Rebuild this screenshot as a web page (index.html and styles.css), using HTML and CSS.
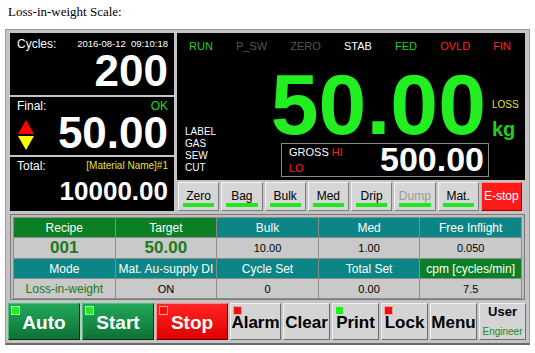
FILE: index.html
```html
<!DOCTYPE html>
<html lang="en">
<head>
  <meta charset="UTF-8" />
  <title>Loss-in-weight Scale</title>
  <link rel="stylesheet" href="styles.css">
</head>
<body>

  <p class="caption">Loss-in-weight Scale:</p>

  <div class="hmi">
    <div class="top">
      <div class="left">
        <div class="box cycles">
          <div class="row"><span>Cycles:</span><span class="date">2016-08-12&nbsp;&nbsp;09:10:18</span></div>
          <div class="big">200</div>
        </div>
        <div class="box final">
          <div class="row"><span>Final:</span><span class="ok">OK</span></div>
          <div class="final-line">
            <svg class="arrows" width="16" height="30" viewBox="0 0 16 30">
              <polygon points="8,0 16,14 0,14" fill="#ff0000"/>
              <polygon points="0,16 16,16 8,30" fill="#ffff00"/>
            </svg>
            <div class="big">50.00</div>
          </div>
        </div>
        <div class="box total">
          <div class="row"><span>Total:</span><span class="mat">[Material Name]#1</span></div>
          <div class="sum">10000.00</div>
        </div>
      </div>

      <div class="right">
        <div class="display">
          <div class="status">
            <span class="on">RUN</span>
            <span class="off">P_SW</span>
            <span class="off">ZERO</span>
            <span>STAB</span>
            <span class="on">FED</span>
            <span class="alarm">OVLD</span>
            <span class="alarm">FIN</span>
          </div>
          <div class="body">
            <div class="flags">
              <div>LABEL</div>
              <div>GAS</div>
              <div>SEW</div>
              <div>CUT</div>
            </div>
            <div class="center">
              <div class="weight">50.00</div>
              <div class="gross">
                <div class="gross-lbl">
                  <div>GROSS <span class="alarm">HI</span></div>
                  <div class="alarm">LO</div>
                </div>
                <div class="gross-val">500.00</div>
              </div>
            </div>
            <div class="units">
              <div class="loss">LOSS</div>
              <div class="kg">kg</div>
            </div>
          </div>
        </div>
        <div class="keys">
          <div class="key">Zero</div>
          <div class="key">Bag</div>
          <div class="key">Bulk</div>
          <div class="key">Med</div>
          <div class="key">Drip</div>
          <div class="key dim">Dump</div>
          <div class="key">Mat.</div>
          <div class="key estop">E-stop</div>
        </div>
      </div>
    </div>

    <div class="params">
      <table>
        <tr>
          <th class="g">Recipe</th>
          <th class="g">Target</th>
          <th>Bulk</th>
          <th>Med</th>
          <th>Free Inflight</th>
        </tr>
        <tr>
          <td class="strong">001</td>
          <td class="strong">50.00</td>
          <td>10.00</td>
          <td>1.00</td>
          <td>0.050</td>
        </tr>
        <tr>
          <th>Mode</th>
          <th>Mat. Au-supply DI</th>
          <th>Cycle Set</th>
          <th>Total Set</th>
          <th class="g">cpm [cycles/min]</th>
        </tr>
        <tr>
          <td class="mode">Loss-in-weight</td>
          <td>ON</td>
          <td>0</td>
          <td>0.00</td>
          <td>7.5</td>
        </tr>
      </table>
    </div>

    <div class="actions">
      <div class="act wide green"><span class="led lg"></span>Auto</div>
      <div class="act wide green"><span class="led lg"></span>Start</div>
      <div class="act wide red"><span class="led lr"></span>Stop</div>
      <div class="act alarm-btn"><span class="led lr"></span>Alarm</div>
      <div class="act">Clear</div>
      <div class="act"><span class="led lg"></span>Print</div>
      <div class="act"><span class="led lr"></span>Lock</div>
      <div class="act">Menu</div>
      <div class="act user">
        <div>User</div>
        <div class="role">Engineer</div>
      </div>
    </div>
  </div>

</body>
</html>
```

FILE: styles.css
```css
* {
  box-sizing: border-box;
}

body {
  margin: 0;
  background: #fff;
  font-family: "Liberation Sans", Arial, sans-serif;
}

.caption {
  margin: 4px 8px 9px;
  font: 13px/16px "Liberation Serif", "Times New Roman", serif;
  color: #000;
}

/* panel frame */
.hmi {
  margin-left: 5px;
  width: 525px;
  height: 316px;
  padding: 3px 4px;
  background: #c4c4c4;
  border: 1px solid #9a9a9a;
  border-bottom: 2px solid #6a6a6a;
  display: flex;
  flex-direction: column;
  gap: 3px;
}

.top {
  display: flex;
  gap: 3px;
  height: 178px;
}

/* left column */
.left {
  width: 164px;
  display: flex;
  flex-direction: column;
  gap: 2px;
}

.box {
  background: #000;
  color: #fff;
  padding: 2px 6px 0 7px;
}

.cycles {
  height: 62px;
  padding-top: 4px;
}

.final {
  height: 58px;
}

.total {
  flex: 1;
}

.row {
  display: flex;
  justify-content: space-between;
  align-items: center;
  font-size: 12px;
  line-height: 14px;
}

.date {
  font-size: 9.5px;
}

.ok {
  color: #22dd22;
}

.mat {
  font-size: 10px;
  color: #e6e040;
}

.big {
  font-size: 44px;
  font-weight: bold;
  line-height: 40px;
  text-align: right;
}

.final-line {
  display: flex;
  align-items: center;
}

.final-line .big {
  flex: 1;
}

.arrows {
  margin: 4px 0 0 1px;
}

.sum {
  margin-top: 3px;
  font-size: 26px;
  font-weight: bold;
  line-height: 30px;
  text-align: right;
}

/* main display */
.right {
  width: 348px;
  display: flex;
  flex-direction: column;
  gap: 2px;
}

.display {
  height: 147px;
  background: #000;
  color: #fff;
  padding: 6px 14px 0 12px;
}

.status {
  display: flex;
  justify-content: space-between;
  font-size: 11px;
  line-height: 14px;
}

.on {
  color: #22cc22;
}

.off {
  color: #555;
}

.alarm {
  color: #ff2020;
}

.body {
  display: flex;
  margin-top: 13px;
}

.flags {
  flex: none;
  width: 96px;
  margin-left: -4px;
  align-self: flex-end;
  padding-bottom: 3px;
  font-size: 10px;
  line-height: 12px;
}

.center {
  flex: none;
  width: 208px;
}

.weight {
  margin-left: -20px;
  font-size: 86px;
  font-weight: bold;
  line-height: 76px;
  color: #22ee22;
  text-align: right;
  padding-right: 3px;
}

.gross {
  margin-top: 1px;
  height: 34px;
  border: 1px solid #8a8a8a;
  display: flex;
  justify-content: space-between;
  padding: 0 4px 0 7px;
}

.gross-lbl {
  font-size: 11px;
  line-height: 16px;
}

.gross-val {
  font-size: 34px;
  font-weight: bold;
  line-height: 34px;
  margin-top: -2px;
}

.units {
  flex: none;
  margin-left: 3px;
  padding-top: 33px;
}

.loss {
  font-size: 10px;
  line-height: 12px;
  color: #e6e040;
}

.kg {
  margin-top: 6px;
  font-size: 20px;
  font-weight: bold;
  line-height: 24px;
  color: #22cc22;
}

/* function keys */
.keys {
  display: flex;
  gap: 2px;
  padding: 0 3px 0 1px;
  height: 29px;
}

.key {
  flex: 1;
  position: relative;
  background: #d6d6d6;
  border: 1px solid;
  border-color: #f4f4f4 #7c7c7c #7c7c7c #f4f4f4;
  font-size: 12px;
  line-height: 14px;
  padding-top: 6px;
  text-align: center;
  color: #000;
}

.key::after {
  content: "";
  position: absolute;
  left: 4px;
  right: 4px;
  bottom: 3px;
  height: 4px;
  background: #22e622;
}

.key.dim {
  color: #9a9a9a;
}

.key.estop {
  background: #ff1a1a;
  border-color: #ff9090 #a00000 #a00000 #ff9090;
  color: #fff;
}

.key.estop::after {
  display: none;
}

/* parameter table */
.params {
  height: 86px;
  border: 1px solid #7a7a7a;
  background: #bdbdbd;
  padding: 2px;
}

table {
  width: 100%;
  height: 100%;
  border-collapse: collapse;
  table-layout: fixed;
}

th, td {
  border: 1px solid #8c8c8c;
  padding: 0;
  text-align: center;
  height: 20px;
}

th {
  background: #0b8585;
  color: #fff;
  font-size: 12px;
  font-weight: normal;
}

th.g {
  background: #0a7f24;
}

td {
  background: #c9c9c9;
  font-size: 11px;
  color: #000;
}

td.strong {
  font-size: 17px;
  font-weight: bold;
  color: #1b7a1b;
}

td.mode {
  font-size: 12px;
  color: #1b7a1b;
}

/* bottom buttons */
.actions {
  display: flex;
  gap: 2px;
  margin: 0 -2px 0 -2px;
  height: 37px;
}

.act {
  position: relative;
  width: 47px;
  display: flex;
  align-items: center;
  justify-content: center;
  font-size: 17px;
  font-weight: bold;
  color: #000;
  background: #d4d4d4;
  border: 1px solid;
  border-color: #f0f0f0 #6c6c6c #6c6c6c #f0f0f0;
  padding-top: 2px;
}

.act.wide {
  width: 72px;
  font-size: 19px;
}

.act.alarm-btn {
  width: 51px;
}

.act.green {
  background: linear-gradient(#23a85a, #0c7234);
  border-color: #45c477 #0a2a14 #0a2a14 #45c477;
  color: #fff;
}

.act.red {
  background: linear-gradient(#ff2424, #e00000);
  border-color: #ff8888 #5a0000 #5a0000 #ff8888;
  color: #fff;
}

.led {
  position: absolute;
  top: 2px;
  left: 2px;
  width: 9px;
  height: 9px;
  border: 1px solid rgba(255, 255, 255, 0.6);
}

.lg {
  background: #22ee22;
}

.lr {
  background: #ee1111;
}

.act.user {
  flex-direction: column;
  font-size: 13px;
  line-height: 16px;
  padding-top: 0;
}

.role {
  margin-top: 4px;
  font-size: 10px;
  font-weight: normal;
  color: #1b8a1b;
}
```
